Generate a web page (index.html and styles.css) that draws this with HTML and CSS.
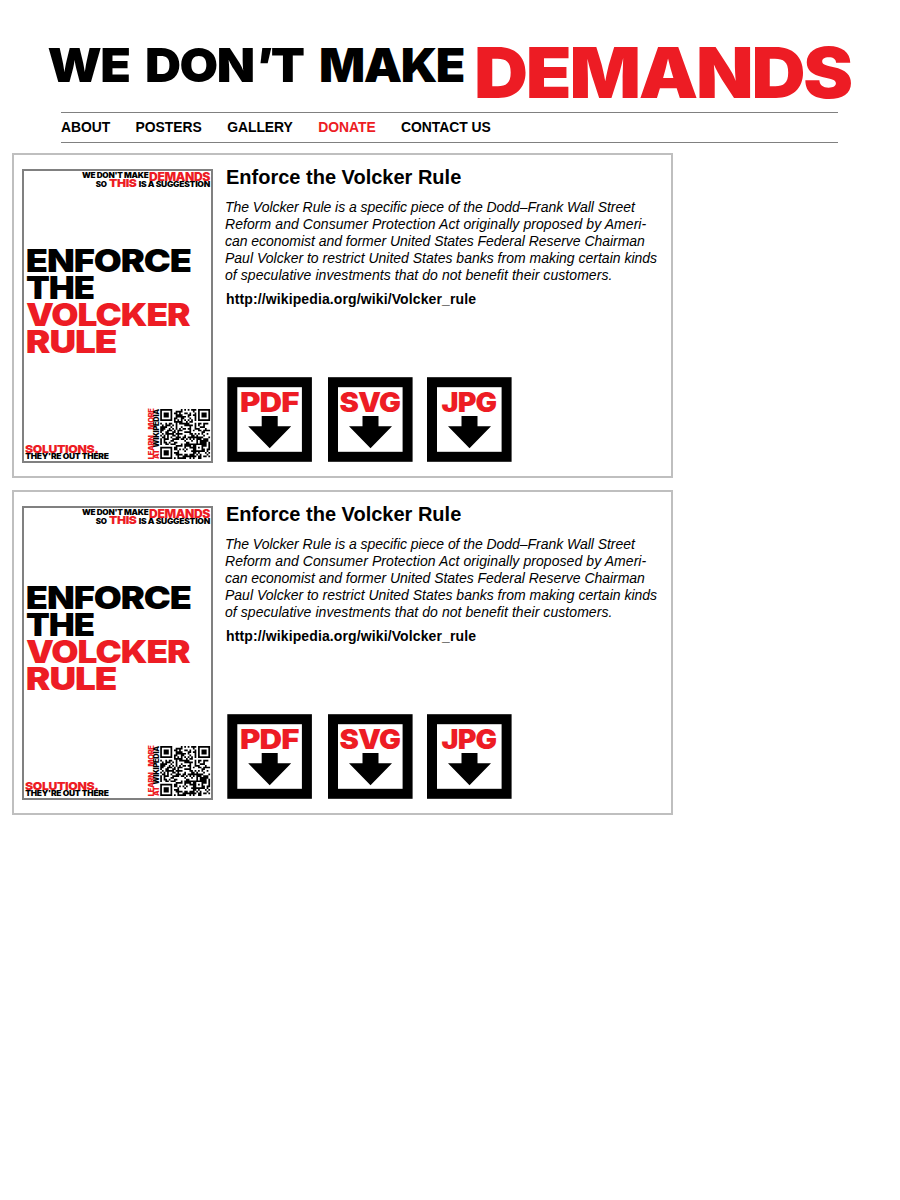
FILE: index.html
```
<!DOCTYPE html>
<html lang="en">
<head>
<meta charset="utf-8">
<title>We Don't Make Demands</title>
<link rel="stylesheet" href="styles.css">
</head>
<body>
<header class="header">
  <svg class="logo" viewBox="30 10 860 98" aria-label="We don't make demands">
    <g font-size="47">
      <text x="47.500" y="82" textLength="82" lengthAdjust="spacingAndGlyphs">WE</text>
      <text x="145" y="82" textLength="158.500" lengthAdjust="spacingAndGlyphs">DON<tspan font-style="italic">'</tspan>T</text>
      <text x="319" y="82" textLength="145" lengthAdjust="spacingAndGlyphs">MAKE</text>
    </g>
    <text class="red" font-size="70" x="474" y="98" textLength="377" lengthAdjust="spacingAndGlyphs">DEMANDS</text>
  </svg>
  <nav class="nav">
    <a>ABOUT</a><a>POSTERS</a><a>GALLERY</a><a class="donate">DONATE</a><a>CONTACT US</a>
  </nav>
</header>
<main class="cards">
  <article class="card">
    <svg class="poster" viewBox="22 169 191 294">
      <rect class="frame" x="23" y="170" width="189" height="292"/>
      <text font-size="7.400" x="82" y="178" textLength="66.500" lengthAdjust="spacingAndGlyphs">WE DON'T MAKE</text>
      <text class="red" font-size="11.200" x="149" y="181" textLength="61" lengthAdjust="spacingAndGlyphs">DEMANDS</text>
      <text font-size="7.400" x="95.700" y="187" textLength="11" lengthAdjust="spacingAndGlyphs">SO</text>
      <text class="red" font-size="11" x="109" y="187" textLength="27.500" lengthAdjust="spacingAndGlyphs">THIS</text>
      <text font-size="7.400" x="138.700" y="187" textLength="71.300" lengthAdjust="spacingAndGlyphs">IS A SUGGESTION</text>
      <text font-size="31.500" x="25.800" y="272" textLength="165" lengthAdjust="spacingAndGlyphs">ENFORCE</text>
      <text font-size="31.500" x="26" y="299" textLength="68" lengthAdjust="spacingAndGlyphs">THE</text>
      <text class="red" font-size="31.500" x="26" y="326" textLength="163.500" lengthAdjust="spacingAndGlyphs">VOLCKER</text>
      <text class="red" font-size="31.500" x="25.800" y="353" textLength="90.500" lengthAdjust="spacingAndGlyphs">RULE</text>
      <text class="red" font-size="11" x="25" y="452.600" textLength="73.500" lengthAdjust="spacingAndGlyphs">SOLUTIONS.</text>
      <text font-size="7.200" x="25.200" y="459.200" textLength="83.500" lengthAdjust="spacingAndGlyphs">THEY'RE OUT THERE</text>
      <g font-size="7">
        <text class="red" transform="translate(153.500 459.300) rotate(-90)" textLength="24" lengthAdjust="spacingAndGlyphs">LEARN</text>
        <text class="red" transform="translate(153.500 429.500) rotate(-90)" textLength="21" lengthAdjust="spacingAndGlyphs">MORE</text>
        <text class="red" transform="translate(159.300 459) rotate(-90)" textLength="9.500" lengthAdjust="spacingAndGlyphs">AT</text>
        <text transform="translate(159.300 447.500) rotate(-90)" textLength="38.500" lengthAdjust="spacingAndGlyphs">WIKIPEDIA</text>
      </g>
      <path class="qr" transform="translate(160.200 409) scale(1.720)"/>
    </svg>
    <div class="info">
      <h2 class="title">Enforce the Volcker Rule</h2>
      <p class="text"><span class="l1">The Volcker Rule is a specific piece of the Dodd–Frank Wall Street</span><span class="l2">Reform and Consumer Protection Act originally proposed by Ameri-</span><span class="l3">can economist and former United States Federal Reserve Chairman</span><span class="l4">Paul Volcker to restrict United States banks from making certain kinds</span><span class="l5">of speculative investments that do not benefit their customers.</span></p>
      <a class="link">http://wikipedia.org/wiki/Volcker_rule</a>
      <div class="downloads">
        <svg class="button" viewBox="0 0 85 85"><rect class="tile" x="5.300" y="5.200" width="74.600" height="74.600"/><text class="red" font-size="27" x="13" y="35" textLength="58.500" lengthAdjust="spacingAndGlyphs">PDF</text><path d="M34.700 39h16v10.300h13.500L42.700 71.200 21.200 49.300h13.500z"/></svg>
        <svg class="button svgfile" viewBox="0 0 85 85"><rect class="tile" x="5" y="5.200" width="74.600" height="74.600"/><text class="red" font-size="27" x="11.500" y="35" textLength="60.500" lengthAdjust="spacingAndGlyphs">SVG</text><path d="M34.500 39h16v10.300h13.500L42.500 71.200 21 49.300h13.500z"/></svg>
        <svg class="button" viewBox="0 0 85 85"><rect class="tile" x="5" y="5.200" width="74.600" height="74.600"/><text class="red" font-size="27" x="14.500" y="35" textLength="54.800" lengthAdjust="spacingAndGlyphs">JPG</text><path d="M34.500 39h16v10.300h13.500L42.500 71.200 21 49.300h13.500z"/></svg>
      </div>
    </div>
  </article>
  <article class="card">
    <svg class="poster" viewBox="22 169 191 294">
      <rect class="frame" x="23" y="170" width="189" height="292"/>
      <text font-size="7.400" x="82" y="178" textLength="66.500" lengthAdjust="spacingAndGlyphs">WE DON'T MAKE</text>
      <text class="red" font-size="11.200" x="149" y="181" textLength="61" lengthAdjust="spacingAndGlyphs">DEMANDS</text>
      <text font-size="7.400" x="95.700" y="187" textLength="11" lengthAdjust="spacingAndGlyphs">SO</text>
      <text class="red" font-size="11" x="109" y="187" textLength="27.500" lengthAdjust="spacingAndGlyphs">THIS</text>
      <text font-size="7.400" x="138.700" y="187" textLength="71.300" lengthAdjust="spacingAndGlyphs">IS A SUGGESTION</text>
      <text font-size="31.500" x="25.800" y="272" textLength="165" lengthAdjust="spacingAndGlyphs">ENFORCE</text>
      <text font-size="31.500" x="26" y="299" textLength="68" lengthAdjust="spacingAndGlyphs">THE</text>
      <text class="red" font-size="31.500" x="26" y="326" textLength="163.500" lengthAdjust="spacingAndGlyphs">VOLCKER</text>
      <text class="red" font-size="31.500" x="25.800" y="353" textLength="90.500" lengthAdjust="spacingAndGlyphs">RULE</text>
      <text class="red" font-size="11" x="25" y="452.600" textLength="73.500" lengthAdjust="spacingAndGlyphs">SOLUTIONS.</text>
      <text font-size="7.200" x="25.200" y="459.200" textLength="83.500" lengthAdjust="spacingAndGlyphs">THEY'RE OUT THERE</text>
      <g font-size="7">
        <text class="red" transform="translate(153.500 459.300) rotate(-90)" textLength="24" lengthAdjust="spacingAndGlyphs">LEARN</text>
        <text class="red" transform="translate(153.500 429.500) rotate(-90)" textLength="21" lengthAdjust="spacingAndGlyphs">MORE</text>
        <text class="red" transform="translate(159.300 459) rotate(-90)" textLength="9.500" lengthAdjust="spacingAndGlyphs">AT</text>
        <text transform="translate(159.300 447.500) rotate(-90)" textLength="38.500" lengthAdjust="spacingAndGlyphs">WIKIPEDIA</text>
      </g>
      <path class="qr" transform="translate(160.200 409) scale(1.720)"/>
    </svg>
    <div class="info">
      <h2 class="title">Enforce the Volcker Rule</h2>
      <p class="text"><span class="l1">The Volcker Rule is a specific piece of the Dodd–Frank Wall Street</span><span class="l2">Reform and Consumer Protection Act originally proposed by Ameri-</span><span class="l3">can economist and former United States Federal Reserve Chairman</span><span class="l4">Paul Volcker to restrict United States banks from making certain kinds</span><span class="l5">of speculative investments that do not benefit their customers.</span></p>
      <a class="link">http://wikipedia.org/wiki/Volcker_rule</a>
      <div class="downloads">
        <svg class="button" viewBox="0 0 85 85"><rect class="tile" x="5.300" y="5.200" width="74.600" height="74.600"/><text class="red" font-size="27" x="13" y="35" textLength="58.500" lengthAdjust="spacingAndGlyphs">PDF</text><path d="M34.700 39h16v10.300h13.500L42.700 71.200 21.200 49.300h13.500z"/></svg>
        <svg class="button svgfile" viewBox="0 0 85 85"><rect class="tile" x="5" y="5.200" width="74.600" height="74.600"/><text class="red" font-size="27" x="11.500" y="35" textLength="60.500" lengthAdjust="spacingAndGlyphs">SVG</text><path d="M34.500 39h16v10.300h13.500L42.500 71.200 21 49.300h13.500z"/></svg>
        <svg class="button" viewBox="0 0 85 85"><rect class="tile" x="5" y="5.200" width="74.600" height="74.600"/><text class="red" font-size="27" x="14.500" y="35" textLength="54.800" lengthAdjust="spacingAndGlyphs">JPG</text><path d="M34.500 39h16v10.300h13.500L42.500 71.200 21 49.300h13.500z"/></svg>
      </div>
    </div>
  </article>
</main>
<script src="qr.js"></script>
</body>
</html>
```
FILE: styles.css
```
body {
  margin: 0;
  background: #fff;
  color: #000;
  font-family: "Liberation Sans", Arial, sans-serif;
}
svg {
  display: block;
  flex: none;
}
svg text {
  font-family: Inter, sans-serif;
  font-weight: 900;
  letter-spacing: -0.03em;
}
.red {
  fill: #ed1c24;
}
.header {
  padding-top: 10px;
}
.logo {
  width: 860px;
  height: 98px;
  margin-left: 30px;
}
.nav {
  box-sizing: border-box;
  width: 777px;
  height: 31px;
  margin: 4px 0 0 61px;
  display: flex;
  gap: 25.3px;
  border-top: 1px solid #808080;
  border-bottom: 1px solid #808080;
  font-size: 13.9px;
  font-weight: bold;
  line-height: 29px;
  letter-spacing: -0.02px;
  white-space: nowrap;
}
.donate {
  color: #ed1c24;
}
.cards {
  display: flex;
  flex-direction: column;
  gap: 12px;
  margin: 10px 0 0 12px;
}
.card {
  box-sizing: border-box;
  width: 661px;
  height: 325px;
  border: 2px solid #bfbfbf;
  padding: 14px 0 0 8px;
  display: flex;
  gap: 12px;
}
.poster {
  width: 191px;
  height: 294px;
}
.frame {
  fill: none;
  stroke: #808080;
  stroke-width: 2;
}
.info {
  white-space: nowrap;
  display: flex;
  flex-direction: column;
}
.title {
  margin: -4px 0 0 1px;
  font-size: 20px;
  line-height: 24px;
}
.text {
  margin: 10px 0 0;
  font-size: 14px;
  font-style: italic;
  line-height: 16.9px;
}
.text span {
  display: block;
  width: max-content;
}
.text .l1 {
  letter-spacing: -0.04px;
}
.text .l2 {
  letter-spacing: 0.07px;
}
.text .l3 {
  letter-spacing: -0.03px;
}
.text .l5 {
  letter-spacing: 0.06px;
}
.link {
  margin: 7.5px 0 0 1px;
  font-size: 14px;
  font-weight: bold;
  line-height: 16px;
  letter-spacing: 0.12px;
}
.downloads {
  display: flex;
  gap: 15px;
  margin: 70px 0 0 2px;
}
.button {
  width: 85px;
  height: 85px;
}
.svgfile {
  margin-left: 1px;
  margin-right: -1px;
}
.tile {
  fill: #fff;
  stroke: #000;
  stroke-width: 10;
}
```
FILE: qr.js
```
// Builds the 29-module code: finders, timing tracks, alignment mark, data area.
const size = 29;
let seed = 77;
function ring(x, y, cx, cy) {
  return Math.max(Math.abs(x - cx), Math.abs(y - cy));
}
function dark(x, y) {
  seed = (seed * 1103515245 + 12345) % 2147483648;
  const bit = (seed >> 16) % 100 < 54;
  for (const [cx, cy] of [[3, 3], [25, 3], [3, 25]]) {
    const r = ring(x, y, cx, cy);
    if (r <= 4) return r === 3 || r < 2;
  }
  const a = ring(x, y, 22, 22);
  if (a <= 2) return a !== 1;
  if (x === 6) return y % 2 === 0;
  if (y === 6) return x % 2 === 0;
  return bit;
}
let d = "";
for (let y = 0; y < size; y++) {
  for (let x = 0; x < size; x++) {
    if (dark(x, y)) d += `M${x} ${y}h1v1h-1z`;
  }
}
document.querySelectorAll(".qr").forEach((p) => p.setAttribute("d", d));
```
